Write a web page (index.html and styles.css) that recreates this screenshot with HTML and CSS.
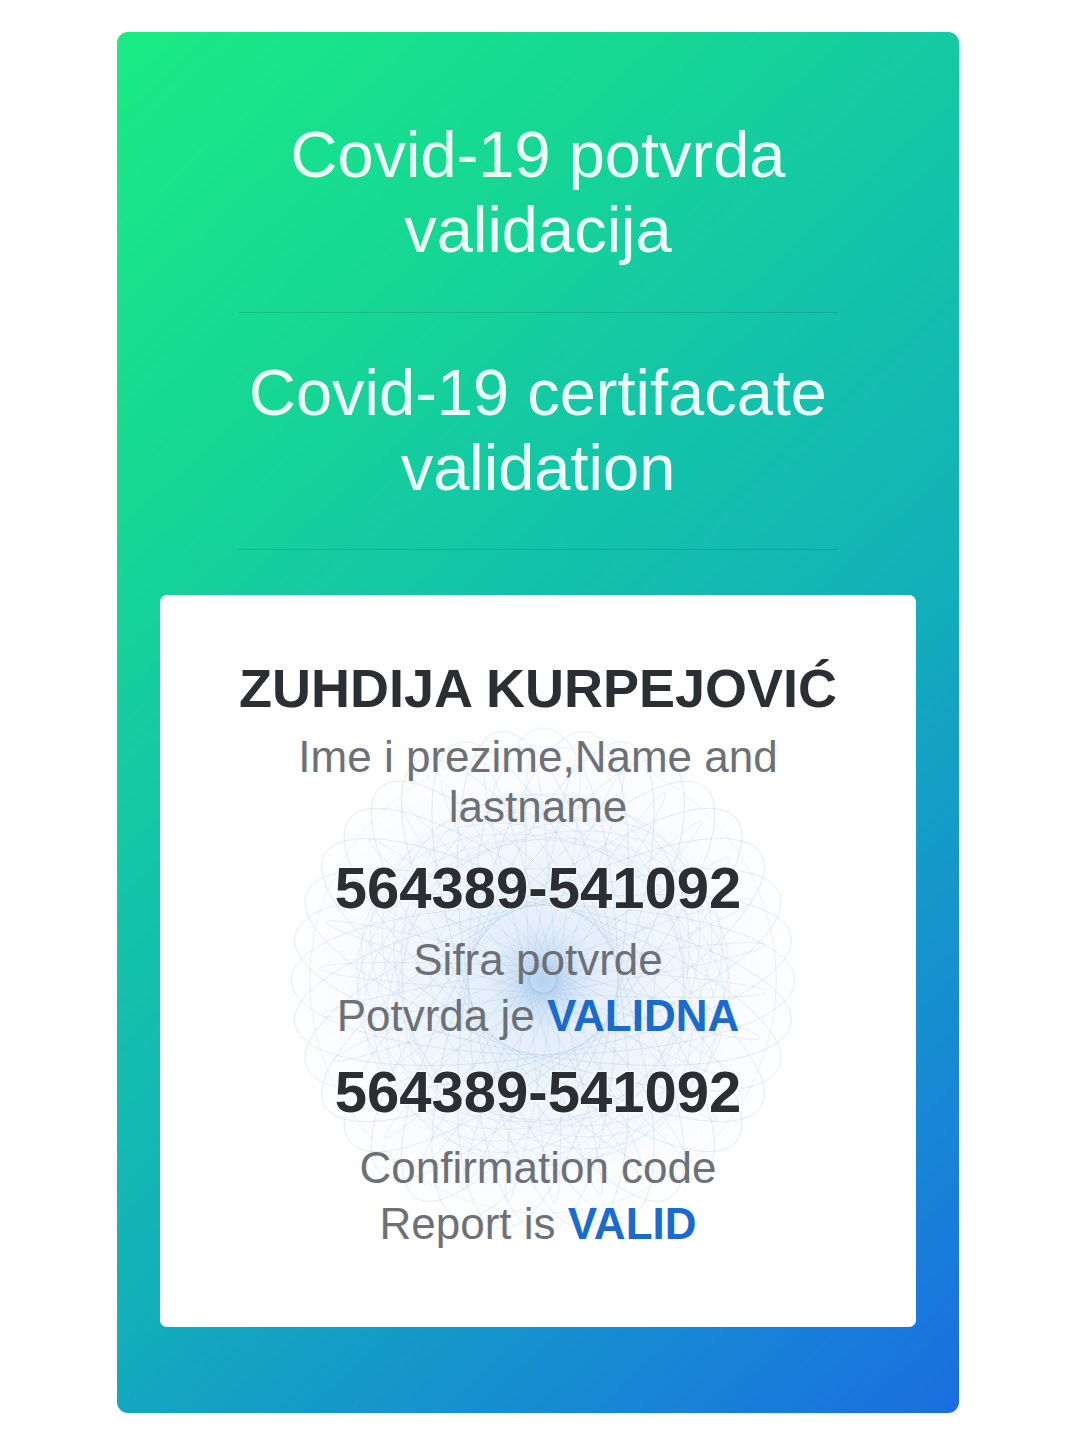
FILE: index.html
```html
<!DOCTYPE html>
<html lang="bs">
<head>
<meta charset="utf-8">
<title>Covid-19 potvrda validacija</title>
<link rel="stylesheet" href="styles.css">
</head>
<body>
<main class="card">
  <h1 class="title">Covid-19 potvrda<br>validacija</h1>
  <hr class="divider">
  <h2 class="title title-en">Covid-19 certifacate<br>validation</h2>
  <hr class="divider">
  <section class="panel">
    <svg class="rosette" viewBox="-300 -300 600 600" aria-hidden="true">
      <defs>
        <radialGradient id="glow" cx="0" cy="0" r="300" gradientUnits="userSpaceOnUse">
          <stop offset="0" stop-color="#4f93de" stop-opacity="0.6"/>
          <stop offset="0.2" stop-color="#86b4e6" stop-opacity="0.3"/>
          <stop offset="0.7" stop-color="#c9def2" stop-opacity="0.14"/>
          <stop offset="1" stop-color="#ffffff" stop-opacity="0"/>
        </radialGradient>
      </defs>
      <circle r="290" fill="url(#glow)"/>
      <g class="ring-a">
        <ellipse rx="270" ry="80"/>
        <ellipse rx="270" ry="80" transform="rotate(10)"/>
        <ellipse rx="270" ry="80" transform="rotate(20)"/>
        <ellipse rx="270" ry="80" transform="rotate(30)"/>
        <ellipse rx="270" ry="80" transform="rotate(40)"/>
        <ellipse rx="270" ry="80" transform="rotate(50)"/>
        <ellipse rx="270" ry="80" transform="rotate(60)"/>
        <ellipse rx="270" ry="80" transform="rotate(70)"/>
        <ellipse rx="270" ry="80" transform="rotate(80)"/>
        <ellipse rx="270" ry="80" transform="rotate(90)"/>
        <ellipse rx="270" ry="80" transform="rotate(100)"/>
        <ellipse rx="270" ry="80" transform="rotate(110)"/>
        <ellipse rx="270" ry="80" transform="rotate(120)"/>
        <ellipse rx="270" ry="80" transform="rotate(130)"/>
        <ellipse rx="270" ry="80" transform="rotate(140)"/>
        <ellipse rx="270" ry="80" transform="rotate(150)"/>
        <ellipse rx="270" ry="80" transform="rotate(160)"/>
        <ellipse rx="270" ry="80" transform="rotate(170)"/>
      </g>
      <g class="ring-b">
        <ellipse rx="200" ry="150" transform="rotate(5)"/>
        <ellipse rx="200" ry="150" transform="rotate(20)"/>
        <ellipse rx="200" ry="150" transform="rotate(35)"/>
        <ellipse rx="200" ry="150" transform="rotate(50)"/>
        <ellipse rx="200" ry="150" transform="rotate(65)"/>
        <ellipse rx="200" ry="150" transform="rotate(80)"/>
        <ellipse rx="200" ry="150" transform="rotate(95)"/>
        <ellipse rx="200" ry="150" transform="rotate(110)"/>
        <ellipse rx="200" ry="150" transform="rotate(125)"/>
        <ellipse rx="200" ry="150" transform="rotate(140)"/>
        <ellipse rx="200" ry="150" transform="rotate(155)"/>
        <ellipse rx="200" ry="150" transform="rotate(170)"/>
        <circle r="250"/>
        <circle r="120"/>
      </g>
      <g class="ring-c">
        <ellipse rx="240" ry="14" transform="rotate(3)"/>
        <ellipse rx="240" ry="14" transform="rotate(15)"/>
        <ellipse rx="240" ry="14" transform="rotate(27)"/>
        <ellipse rx="240" ry="14" transform="rotate(39)"/>
        <ellipse rx="240" ry="14" transform="rotate(51)"/>
        <ellipse rx="240" ry="14" transform="rotate(63)"/>
        <ellipse rx="240" ry="14" transform="rotate(75)"/>
        <ellipse rx="240" ry="14" transform="rotate(87)"/>
        <ellipse rx="240" ry="14" transform="rotate(99)"/>
        <ellipse rx="240" ry="14" transform="rotate(111)"/>
        <ellipse rx="240" ry="14" transform="rotate(123)"/>
        <ellipse rx="240" ry="14" transform="rotate(135)"/>
        <ellipse rx="240" ry="14" transform="rotate(147)"/>
        <ellipse rx="240" ry="14" transform="rotate(159)"/>
        <ellipse rx="240" ry="14" transform="rotate(171)"/>
      </g>
    </svg>
    <div class="panel-body">
      <p class="name">ZUHDIJA KURPEJOVIĆ</p>
      <p class="label label-name">Ime i prezime,Name and lastname</p>
      <p class="code">564389-541092</p>
      <p class="label label-sub">Sifra potvrde</p>
      <p class="label">Potvrda je <strong class="valid">VALIDNA</strong></p>
      <p class="code code-second">564389-541092</p>
      <p class="label label-sub2">Confirmation code</p>
      <p class="label">Report is <strong class="valid">VALID</strong></p>
    </div>
  </section>
</main>
</body>
</html>
```

FILE: styles.css
```css
* {
  box-sizing: border-box;
}

html, body {
  margin: 0;
  padding: 0;
  background: #ffffff;
}

body {
  font-family: "Liberation Sans", Arial, sans-serif;
  width: 1080px;
  height: 1438px;
  overflow: hidden;
  padding-top: 32px;
}

.card {
  width: 842px;
  height: 1381px;
  margin-left: 117px;
  border-radius: 11px;
  background: linear-gradient(138deg, #1aeb84 0%, #16d596 25%, #14c9a4 36%, #12b2b8 59%, #13a6c0 65%, #1882d8 88%, #1a6ee0 100%);
  padding: 85px 43px 0;
  display: flex;
  flex-direction: column;
  align-items: center;
}

.title {
  margin: 0;
  font-weight: 400;
  font-size: 65px;
  line-height: 75px;
  color: #ecfdf5;
  text-align: center;
}

.divider {
  width: 598px;
  height: 1px;
  border: 0;
  margin: 45px 0 0;
  background: rgba(0, 60, 60, 0.18);
}

.divider + .title-en {
  margin-top: 42px;
}

.title-en + .divider {
  margin-top: 44px;
}

.panel {
  position: relative;
  width: 756px;
  height: 732px;
  margin-top: 45px;
  background: #ffffff;
  border-radius: 7px;
  overflow: hidden;
}

.rosette {
  position: absolute;
  left: 103px;
  top: 105px;
  width: 560px;
  height: 560px;
  opacity: 0.7;
}

.ring-a ellipse {
  fill: none;
  stroke: #6f9fd2;
  stroke-width: 0.5;
  stroke-opacity: 0.55;
}

.ring-b ellipse,
.ring-b circle {
  fill: none;
  stroke: #8fb3dc;
  stroke-width: 0.5;
  stroke-opacity: 0.5;
}

.ring-c ellipse {
  fill: none;
  stroke: #5d93d4;
  stroke-width: 0.5;
  stroke-opacity: 0.4;
}

.panel-body {
  position: relative;
  padding-top: 61px;
  display: flex;
  flex-direction: column;
  align-items: center;
  text-align: center;
}

.panel-body p {
  margin: 0;
}

.name {
  font-weight: 700;
  font-size: 54px;
  line-height: 64px;
  color: #2b2e33;
}

.label {
  font-size: 44px;
  line-height: 56px;
  color: #6d7177;
}

.label-name {
  max-width: 560px;
  line-height: 50px;
  margin-top: 12px !important;
}

.code {
  font-weight: 700;
  font-size: 58px;
  line-height: 64px;
  color: #2b2e33;
  margin-top: 24px !important;
  text-shadow: 0 0 3px #ffffff, 0 0 3px #ffffff, 0 0 2px #ffffff;
}

.code-second {
  margin-top: 16px !important;
}

.label-sub {
  margin-top: 12px !important;
}

.label-sub2 {
  margin-top: 16px !important;
}

.valid {
  font-weight: 700;
  color: #1a6bcc;
}
```
